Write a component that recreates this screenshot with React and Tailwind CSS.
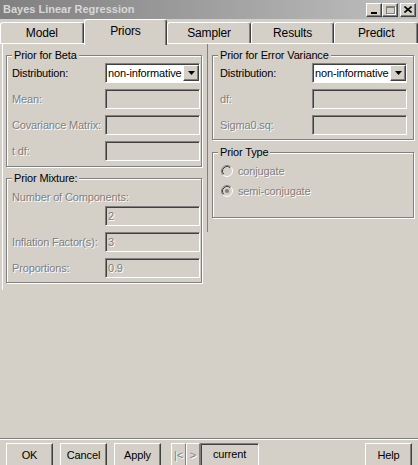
import React from 'react';

// classic win2k bevels
const sunken = "border-t border-l border-b border-r border-t-[#808080] border-l-[#808080] border-b-white border-r-white shadow-[inset_1px_1px_0_#404040]";
const raised = "border-t border-l border-b border-r border-t-white border-l-white border-b-[#404040] border-r-[#404040] shadow-[inset_-1px_-1px_0_#808080]";
const etched = "border border-[#808080] shadow-[1px_1px_0_#fff,inset_1px_1px_0_#fff]";
const dim = "text-[#808080] [text-shadow:1px_1px_0_#fff]";

function Group({ title, className = '', children }) {
  return (
    <div className={`relative ${etched} ${className}`}>
      <span className="absolute -top-[7px] left-[5px] px-[2px] bg-[#d4d0c8] leading-[13px] text-black">{title}</span>
      {children}
    </div>
  );
}

function Select({ width = 'w-[95px]' }) {
  return (
    <div className={`${width} h-[20px] bg-white ${sunken} flex items-center`}>
      <span className="flex-1 pl-[2px] leading-[13px] text-black overflow-hidden whitespace-nowrap">non-informative</span>
      <span className={`w-[16px] h-[16px] bg-[#d4d0c8] ${raised} flex items-center justify-center`}>
        <svg width="7" height="4" viewBox="0 0 7 4"><path d="M0 0h7L3.5 4z" fill="#000" /></svg>
      </span>
    </div>
  );
}

function Field({ value = '', width = 'w-[95px]' }) {
  return (
    <div className={`${width} h-[20px] ${sunken} flex items-center pl-[2px] ${dim}`}>{value}</div>
  );
}

function Row({ label, disabled, labelW, children }) {
  return (
    <div className="flex items-center h-[20px]">
      <span className={`${labelW} whitespace-nowrap ${disabled ? dim : 'text-black'}`}>{label}</span>
      {children}
    </div>
  );
}

function Radio({ checked, label }) {
  return (
    <div className="flex items-center h-[20px] gap-[5px]">
      <svg width="12" height="12" viewBox="0 0 12 12">
        <circle cx="6" cy="6" r="4.5" fill="#d4d0c8" />
        <path d="M2.11 9.89A5.5 5.5 0 0 1 9.89 2.11" stroke="#808080" fill="none" />
        <path d="M9.89 2.11A5.5 5.5 0 0 1 2.11 9.89" stroke="#fff" fill="none" />
        <path d="M2.82 9.18A4.5 4.5 0 0 1 9.18 2.82" stroke="#404040" fill="none" />
        {checked && <circle cx="6" cy="6" r="2" fill="#808080" />}
      </svg>
      <span className={dim}>{label}</span>
    </div>
  );
}

function Btn({ children, className = '' }) {
  return (
    <div className={`h-[27px] ${raised} flex items-start justify-center pt-[5px] text-black ${className}`}>{children}</div>
  );
}

export default function App() {
  const tabs = ['Model', 'Priors', 'Sampler', 'Results', 'Predict'];

  return (
    <div className="w-[418px] h-[465px] overflow-hidden bg-[#d4d0c8] flex flex-col font-['Liberation_Sans',Arial,sans-serif] text-[11px] leading-[13px] tracking-[-0.15px]">
      {/* title bar */}
      <div className="h-[19px] shrink-0 flex items-center justify-between pl-[3px] pr-[2px] bg-gradient-to-r from-[#808080] to-[#c0c0c0]">
        <span className="font-bold text-[#d8d8d8] text-[11px] tracking-normal">Bayes Linear Regression</span>
        <div className="flex items-center">
          <div className={`w-[16px] h-[14px] bg-[#d4d0c8] ${raised} flex items-end justify-center pb-[2px]`}>
            <div className="w-[6px] h-[2px] bg-black" />
          </div>
          <div className={`w-[16px] h-[14px] bg-[#d4d0c8] ${raised} flex items-center justify-center`}>
            <div className="w-[9px] h-[8px] border border-[#808080] border-t-2 shadow-[1px_1px_0_#fff]" />
          </div>
          <div className={`ml-[2px] w-[16px] h-[14px] bg-[#d4d0c8] ${raised} flex items-center justify-center`}>
            <svg width="8" height="7" viewBox="0 0 8 7">
              <path d="M0.5 0.5L7.5 6.5M7.5 0.5L0.5 6.5" stroke="#000" strokeWidth="1.6" />
            </svg>
          </div>
        </div>
      </div>

      {/* tabs */}
      <div className="h-[24px] shrink-0 flex items-end">
        {tabs.map((t) => {
          const sel = t === 'Priors';
          return (
            <div
              key={t}
              className={`flex-1 flex items-center justify-center text-black text-[12px] rounded-t-[3px] border-t border-l border-r border-t-white border-l-white border-r-[#404040] shadow-[inset_-1px_0_0_#808080] ${
                sel ? 'h-[26px] -mb-[2px] relative z-10 bg-[#d4d0c8] pb-[3px]' : 'h-[21px]'
              }`}
            >
              {t}
            </div>
          );
        })}
      </div>

      {/* page */}
      <div className="flex-1 border-t border-white flex items-start">
        <div className="ml-[2px] w-[205px] border-l border-white pt-[11px] pl-[3px] pb-[7px]">
          <Group title="Prior for Beta" className="w-[196px] pt-[7px] pl-[5px] pr-[1px] pb-[5px]">
            <div className="flex flex-col gap-[6px]">
              <Row label="Distribution:" labelW="w-[93px]"><Select /></Row>
              <Row label="Mean:" labelW="w-[93px]" disabled><Field /></Row>
              <Row label="Covariance Matrix:" labelW="w-[93px]" disabled><Field /></Row>
              <Row label="t df:" labelW="w-[93px]" disabled><Field /></Row>
            </div>
          </Group>

          <Group title="Prior Mixture:" className="mt-[11px] w-[196px] pt-[9px] pl-[5px] pr-[1px] pb-[4px]">
            <div className={`h-[18px] flex items-center ${dim}`}>Number of Components:</div>
            <div className="flex">
              <div className="w-[93px]" />
              <Field value="2" />
            </div>
            <div className="flex flex-col gap-[6px] mt-[6px]">
              <Row label="Inflation Factor(s):" labelW="w-[93px]" disabled><Field value="3" /></Row>
              <Row label="Proportions:" labelW="w-[93px]" disabled><Field value="0.9" /></Row>
            </div>
          </Group>
        </div>

        <div className="w-[210px] border-l border-[#808080] pt-[11px] pl-[4px] pb-[14px]">
          <Group title="Prior for Error Variance" className="w-[202px] pt-[7px] pl-[7px] pr-[6px] pb-[4px]">
            <div className="flex flex-col gap-[6px]">
              <Row label="Distribution:" labelW="w-[92px]"><Select /></Row>
              <Row label="df:" labelW="w-[92px]" disabled><Field /></Row>
              <Row label="Sigma0.sq:" labelW="w-[92px]" disabled><Field /></Row>
            </div>
          </Group>

          <Group title="Prior Type" className="mt-[12px] w-[202px] pt-[8px] pl-[8px] pb-[16px]">
            <Radio label="conjugate" />
            <Radio label="semi-conjugate" checked />
          </Group>
        </div>
      </div>

      {/* bottom buttons */}
      <div className="h-[27px] shrink-0 border-t border-[#808080] shadow-[inset_0_1px_0_#fff] pt-[4px] pl-[6px] pr-[6px] flex items-start">
        <Btn className="w-[47px]">OK</Btn>
        <Btn className="w-[47px] ml-[7px]">Cancel</Btn>
        <Btn className="w-[47px] ml-[7px]">Apply</Btn>
        <div className="ml-[10px] flex items-start">
          <div className={`w-[15px] h-[27px] border border-t-white border-l-white border-b-[#808080] border-r-[#808080] flex items-start pt-[5px] justify-center ${dim}`}>|&lt;</div>
          <div className={`w-[14px] h-[27px] border border-t-white border-l-white border-b-[#808080] border-r-[#808080] flex items-start pt-[5px] justify-center ${dim}`}>&gt;</div>
          <div className={`w-[59px] h-[27px] ${sunken} flex items-start justify-center pt-[4px] text-black`}>current</div>
        </div>
        <Btn className="w-[47px] ml-auto">Help</Btn>
      </div>
    </div>
  );
}
